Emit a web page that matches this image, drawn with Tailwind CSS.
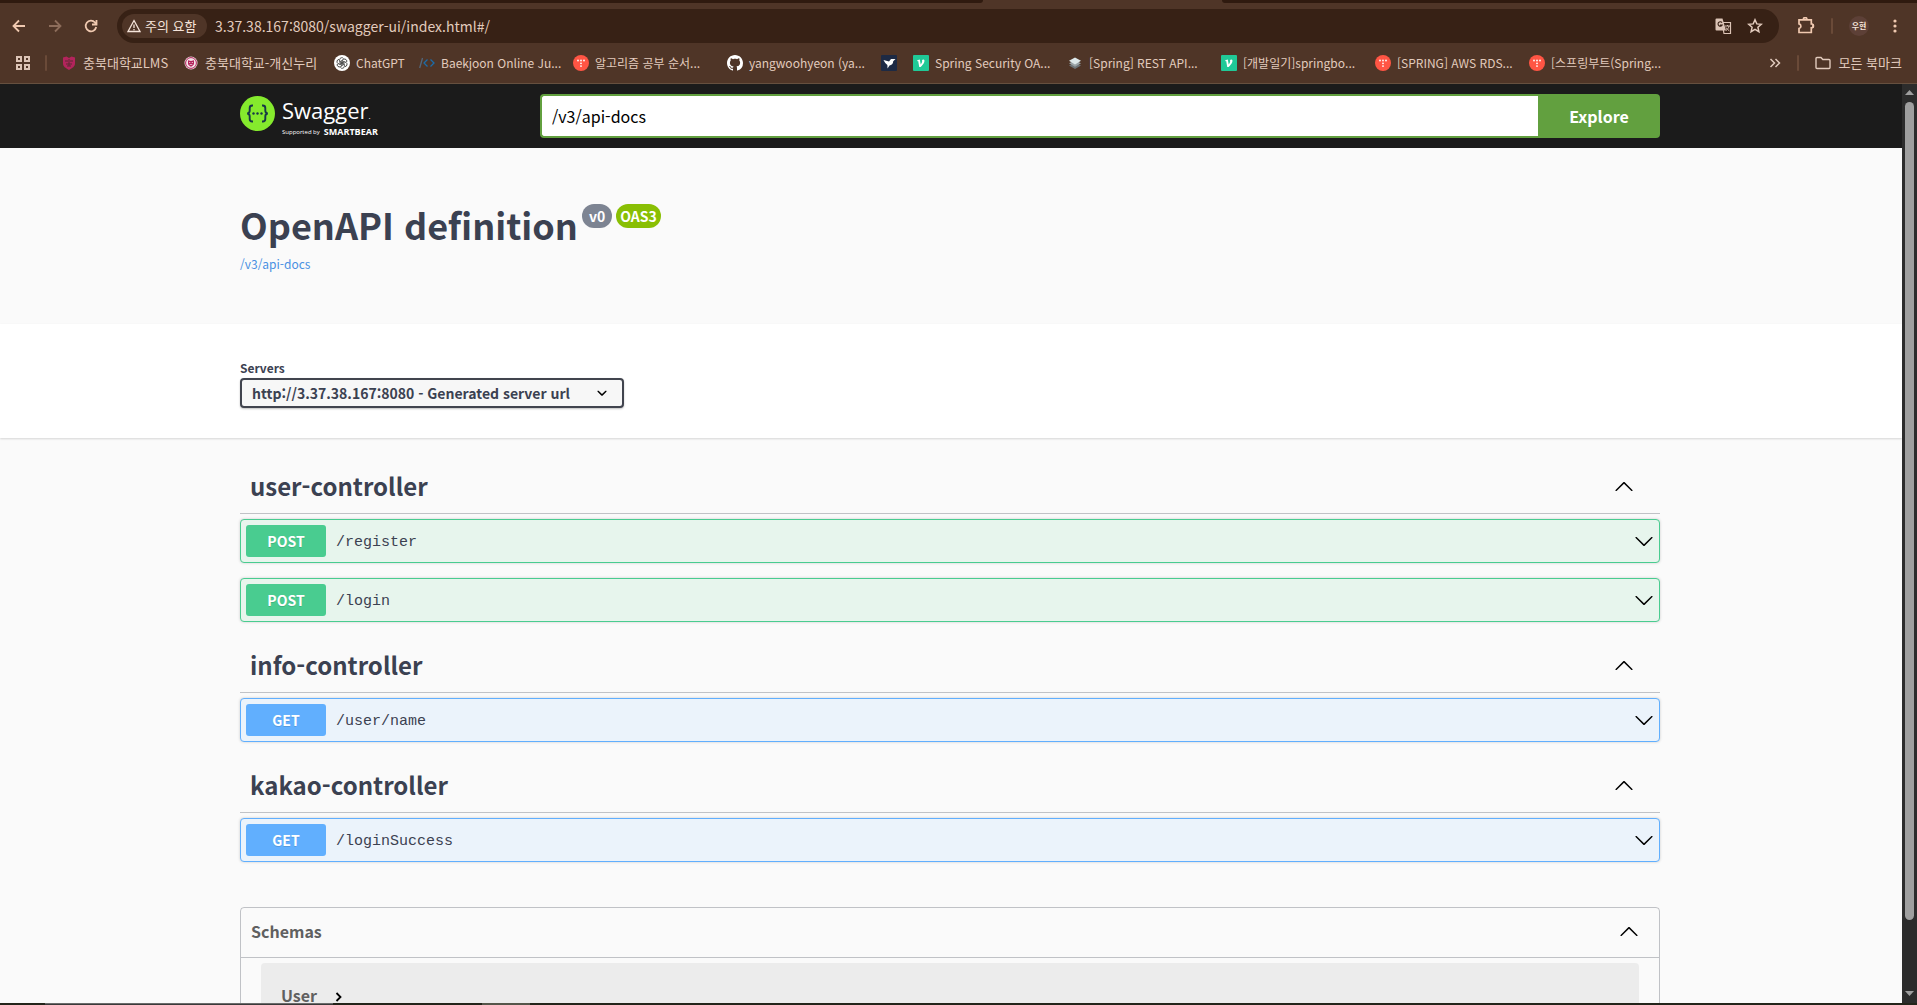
<!DOCTYPE html>
<html lang="ko">
<head>
    <meta charset="UTF-8">
    <meta name="viewport" content="width=device-width, initial-scale=1.0">
    <title>Swagger UI</title>
    <script src="https://cdn.jsdelivr.net/npm/@tailwindcss/browser@4"></script>
</head>
<body class="h-screen flex flex-col overflow-hidden bg-[#23241a] font-['Noto_Sans_CJK_KR',sans-serif] text-[#3b4151]">
    <!-- Shared icons -->
    <svg class="hidden">
        <symbol id="arrow-up" viewBox="0 0 20 20"><path d="M17.418 14.908c.272.268.709.268.979 0s.271-.701 0-.969l-7.908-7.83c-.27-.268-.707-.268-.979 0l-7.908 7.83c-.27.268-.27.701 0 .969.271.268.709.268.979 0L10 7.767l7.418 7.141z"/></symbol>
        <symbol id="arrow-down" viewBox="0 0 20 20"><path d="M17.418 6.109c.272-.268.709-.268.979 0s.271.701 0 .969l-7.908 7.83c-.27.268-.707.268-.979 0l-7.908-7.83c-.27-.268-.27-.701 0-.969.271-.268.709-.268.979 0L10 13.25l7.418-7.141z"/></symbol>
        <symbol id="tistory" viewBox="0 0 16 16"><circle cx="8" cy="8" r="8" fill="#ff5544"/><g fill="#fff"><circle cx="5" cy="5.5" r="0.9"/><circle cx="8" cy="5.5" r="0.9"/><circle cx="11" cy="5.5" r="0.9"/><circle cx="8" cy="8.3" r="0.9"/><circle cx="8" cy="11.1" r="0.9"/></g></symbol>
        <symbol id="velog" viewBox="0 0 16 16"><rect width="16" height="16" rx="1" fill="#20c997"/><path d="M4.3 5.2 6.8 4.6l.9 4.8c1-1.3 1.7-2.6 1.4-3.6-.2-.5 0-1.3 1.1-1.3 1.5 0 1.6 1.4.9 2.9-.7 1.5-2 3.2-3.5 4.7H6.2L5.2 6.1l-1 .1z" fill="#fff"/></symbol>
    </svg>

    <!-- Browser toolbar -->
    <header class="shrink-0 bg-[#4f3527] border-b border-[#66503f] text-[#e2cbbd]">
        <div class="flex h-[3px] justify-between">
            <div class="w-[983px] bg-[#2f1a0f] rounded-br-lg"></div>
            <div class="w-[695px] bg-[#2f1a0f] rounded-bl-lg"></div>
        </div>
        <div class="flex items-center pl-2 pr-[14px] pt-[6px]">
            <button class="w-[22px] flex justify-center text-[#f0c9b0]" aria-label="Back">
                <svg class="size-4" viewBox="0 0 16 16" fill="none" stroke="currentColor" stroke-width="1.8"><path d="M14 8H3M8 2.5 2.5 8 8 13.5"/></svg>
            </button>
            <button class="w-[22px] ml-[14px] flex justify-center text-[#8d6d5b]" aria-label="Forward">
                <svg class="size-4" viewBox="0 0 16 16" fill="none" stroke="currentColor" stroke-width="1.8"><path d="M2 8h11M8 2.5 13.5 8 8 13.5"/></svg>
            </button>
            <button class="w-[22px] ml-[14px] flex justify-center text-[#f0c9b0]" aria-label="Reload">
                <svg class="size-4" viewBox="0 0 16 16" fill="none" stroke="currentColor" stroke-width="1.8"><path d="M13.2 9A5.3 5.3 0 1 1 12 4.5L13.5 6M13.5 2v4.5H9"/></svg>
            </button>
            <div class="flex-1 flex items-center h-[34px] ml-[15px] pl-[5px] pr-4 rounded-full bg-[#372115]">
                <button class="flex items-center gap-1 h-6 w-[85px] px-[5px] rounded-full bg-[#4f3527] text-[13px] leading-4 text-[#f5e4da] whitespace-nowrap">
                    <svg class="size-[14px] shrink-0" viewBox="0 0 14 14" fill="none" stroke="currentColor" stroke-width="1.3"><path d="M7 1.5 13 12.5H1zM7 5.5v3.5M7 10v1.3"/></svg>
                    주의 요함
                </button>
                <input type="text" aria-label="Address" value="3.37.38.167:8080/swagger-ui/index.html#/" class="flex-1 ml-2 text-sm leading-5 text-[#e2cbbd] bg-transparent outline-none">
                <button aria-label="Translate">
                    <svg class="size-[17px]" viewBox="0 0 17 17"><path d="M7 4.5h8.5v11H9z" fill="none" stroke="#dcc4b6" stroke-width="1.2"/><path d="M1.5 0.5h6l3.5 12H1.5a1 1 0 0 1-1-1v-10a1 1 0 0 1 1-1z" fill="#dcc4b6"/><path d="M7 4.6A2.2 2.2 0 1 0 7.2 7H5" fill="none" stroke="#372115" stroke-width="1.1"/><path d="M10 8h5M12.5 7v1M14 8c-.5 2-1.5 3.5-3 4.5M11 9.5c1 1.5 2 2.5 3.2 3.2" fill="none" stroke="#dcc4b6"/></svg>
                </button>
                <button aria-label="Bookmark" class="ml-[15px]">
                    <svg class="size-4" viewBox="0 0 16 16" fill="none" stroke="#e2cbbd" stroke-width="1.5"><path d="m8 1.8 1.8 4.1 4.5.4-3.4 3 1 4.4L8 11.4l-3.9 2.3 1-4.4-3.4-3 4.5-.4z"/></svg>
                </button>
            </div>
            <button class="ml-[18px]" aria-label="Extensions">
                <svg class="size-[18px]" viewBox="0 0 18 18" fill="none" stroke="#f0c9b0" stroke-width="1.7"><path d="M2 2.8h12.3v4.2a1.9 1.9 0 0 1 0 3.8V15.5H2v-4a2.4 2.4 0 0 0 0-4.7z"/><path d="M6.3 2a1.9 1.9 0 0 1 3.7 0M15 7.4a1.5 1.5 0 0 1 0 3"/></svg>
            </button>
            <div class="w-0.5 h-4 ml-4 rounded bg-[#6a4a38]"></div>
            <button class="size-5 ml-4 rounded-full bg-[#5d4037] text-[8px] leading-5 font-bold text-[#f5e4da]">우현</button>
            <button class="ml-[18px]" aria-label="Menu">
                <svg class="size-4" viewBox="0 0 16 16" fill="#f0c9b0"><circle cx="8" cy="3" r="1.6"/><circle cx="8" cy="8" r="1.6"/><circle cx="8" cy="13" r="1.6"/></svg>
            </button>
        </div>

        <!-- Bookmarks -->
        <nav class="flex items-center h-10 pl-4 pr-[15px] text-xs whitespace-nowrap">
            <button aria-label="Apps">
                <svg class="size-[14px]" viewBox="0 0 14 14" fill="none" stroke="#dcc4b6" stroke-width="2"><path d="M1 1h4v4H1zM9 1h4v4H9zM1 9h4v4H1zM9 9h4v4H9z"/></svg>
            </button>
            <div class="w-0.5 h-4 ml-[15px] mr-[14px] rounded bg-[#6a4a38]"></div>
            <a href="#" class="flex items-center gap-[6px] w-[122px] text-[13px]">
                <svg class="size-4 shrink-0" viewBox="0 0 16 16"><path d="M2 2.5 5.5 1.5 8 3l2.5-1.5L14 2.5v6c0 3-2.5 4.5-6 6.5-3.5-2-6-3.5-6-6.5z" fill="#b3245c"/><path d="M4 6h3M9 6h3M5 9h6M8 4v7M6 11h4" stroke="#5d2a33" fill="none"/></svg>
                충북대학교LMS
            </a>
            <a href="#" class="flex items-center gap-[6px] w-[151px] text-[13px]">
                <svg class="size-4 shrink-0" viewBox="0 0 16 16"><circle cx="8" cy="8" r="6.5" fill="#f4e3e8"/><circle cx="8" cy="8" r="5.4" fill="none" stroke="#b3245c"/><path d="M5 5.3 8 6l3-.7v3.2c0 1.5-1.3 2.2-3 3.2-1.7-1-3-1.7-3-3.2z" fill="#b3245c"/><path d="M6 7.5h1.3M8.7 7.5H10M6.7 9.5h2.6" stroke="#f4e3e8" stroke-width="0.7"/></svg>
                충북대학교-개신누리
            </a>
            <a href="#" class="flex items-center gap-[6px] w-[85px]">
                <svg class="size-4 shrink-0" viewBox="0 0 16 16" fill="none" stroke="#333" stroke-width="0.8"><circle cx="8" cy="8" r="8" fill="#fff" stroke="none"/><g id="petal"><path d="M8 8 5.6 6.6V4.8a2.2 2.2 0 0 1 4-1.2"/></g><use href="#petal" transform="rotate(60 8 8)"/><use href="#petal" transform="rotate(120 8 8)"/><use href="#petal" transform="rotate(180 8 8)"/><use href="#petal" transform="rotate(240 8 8)"/><use href="#petal" transform="rotate(300 8 8)"/><circle cx="8" cy="8" r="2.2"/></svg>
                ChatGPT
            </a>
            <a href="#" class="flex items-center gap-[6px] w-[154px]">
                <svg class="size-4 shrink-0" viewBox="0 0 16 16" fill="none" stroke-width="1.3"><path d="M3.5 3 .7 13" stroke="#54677a"/><path d="M8.5 4.5 5 8l3.5 3.5M11.5 4.5 15 8l-3.5 3.5" stroke="#1c6ca8"/></svg>
                Baekjoon Online Ju...
            </a>
            <a href="#" class="flex items-center gap-[6px] w-[154px]">
                <svg class="size-4 shrink-0"><use href="#tistory"/></svg>
                알고리즘 공부 순서...
            </a>
            <a href="#" class="flex items-center gap-[6px] w-[154px]">
                <svg class="size-4 shrink-0" viewBox="0 0 16 16" fill="#fff"><path d="M8 0C3.58 0 0 3.58 0 8c0 3.54 2.29 6.53 5.47 7.59.4.07.55-.17.55-.38 0-.19-.01-.82-.01-1.49-2.01.37-2.53-.49-2.69-.94-.09-.23-.48-.94-.82-1.13-.28-.15-.68-.52-.01-.53.63-.01 1.08.58 1.23.82.72 1.21 1.87.87 2.33.66.07-.52.28-.87.51-1.07-1.78-.2-3.64-.89-3.64-3.95 0-.87.31-1.59.82-2.15-.08-.2-.36-1.02.08-2.12 0 0 .67-.21 2.2.82.64-.18 1.32-.27 2-.27s1.36.09 2 .27c1.53-1.04 2.2-.82 2.2-.82.44 1.1.16 1.92.08 2.12.51.56.82 1.27.82 2.15 0 3.07-1.87 3.75-3.65 3.95.29.25.54.73.54 1.48 0 1.07-.01 1.93-.01 2.2 0 .21.15.46.55.38A8.01 8.01 0 0 0 16 8c0-4.42-3.58-8-8-8z"/></svg>
                yangwoohyeon (ya...
            </a>
            <a href="#" class="w-8" aria-label="Bird">
                <svg class="size-4" viewBox="0 0 16 16"><rect width="16" height="16" rx="1" fill="#1d2a44"/><path d="M2.5 5 8 6.5 10 4h4.5L12.2 6.2c0 2.5-1.7 4-3.7 4.3L6.5 13.5 6.4 10C5 9 3.5 7 2.5 5z" fill="#fff"/></svg>
            </a>
            <a href="#" class="flex items-center gap-[6px] w-[154px]">
                <svg class="size-4 shrink-0"><use href="#velog"/></svg>
                Spring Security OA...
            </a>
            <a href="#" class="flex items-center gap-[6px] w-[154px]">
                <svg class="size-4 shrink-0" viewBox="0 0 16 16"><path d="m2 10.5 6 3.5 6-3.5-6-3z" fill="#6d7478"/><path d="m2 8.3 6 3.5 6-3.5-6-3z" fill="#9aa3a6"/><path d="M2 5.8 8 2.5l6 3.3-6 3.7z" fill="#dde8ea"/></svg>
                [Spring] REST API...
            </a>
            <a href="#" class="flex items-center gap-[6px] w-[154px]">
                <svg class="size-4 shrink-0"><use href="#velog"/></svg>
                [개발일기]springbo...
            </a>
            <a href="#" class="flex items-center gap-[6px] w-[154px]">
                <svg class="size-4 shrink-0"><use href="#tistory"/></svg>
                [SPRING] AWS RDS...
            </a>
            <a href="#" class="flex items-center gap-[6px] w-[154px]">
                <svg class="size-4 shrink-0"><use href="#tistory"/></svg>
                [스프링부트(Spring...
            </a>
            <button class="ml-auto" aria-label="More bookmarks">
                <svg class="size-3" viewBox="0 0 12 12" fill="none" stroke="#e2cbbd" stroke-width="1.5"><path d="m1.5 2 4 4-4 4M6.5 2l4 4-4 4"/></svg>
            </button>
            <div class="w-0.5 h-4 ml-4 mr-4 rounded bg-[#6a4a38]"></div>
            <a href="#" class="flex items-center gap-2">
                <svg class="w-4 h-[14px]" viewBox="0 0 16 14" fill="none" stroke="#e2cbbd" stroke-width="1.4"><path d="M1 2.5a1 1 0 0 1 1-1h4L7.8 3.5H14a1 1 0 0 1 1 1v7a1 1 0 0 1-1 1H2a1 1 0 0 1-1-1z"/></svg>
                <span class="text-[13px]">모든 북마크</span>
            </a>
        </nav>
    </header>

    <div class="flex-1 min-h-0 flex">
        <main class="flex-1 min-w-0 overflow-hidden bg-[#fafafa]">
            <!-- Topbar -->
            <div class="bg-[#1b1b1b]">
                <div class="max-w-[1462px] mx-auto pl-5 pr-[22px] py-[10px] flex items-center">
                    <a href="#" class="flex items-start w-[300px] h-11 pt-0.5 gap-[7px] text-white">
                        <svg class="size-[35px]" viewBox="0 0 35 35"><circle cx="17.5" cy="17.5" r="17.5" fill="#85ea2d"/><g fill="none" stroke="#173647" stroke-width="1.9"><path d="M13 9.5h-.8c-1.6 0-2.5.8-2.5 2.5v2.5c0 1.8-.7 2.8-2.5 3 1.8.2 2.5 1.2 2.5 3V23c0 1.7.9 2.5 2.5 2.5h.8M22 9.5h.8c1.6 0 2.5.8 2.5 2.5v2.5c0 1.8.7 2.8 2.5 3-1.8.2-2.5 1.2-2.5 3V23c0 1.7-.9 2.5-2.5 2.5H22"/></g><g fill="#173647"><circle cx="13.5" cy="17.5" r="1.2"/><circle cx="17.5" cy="17.5" r="1.2"/><circle cx="21.5" cy="17.5" r="1.2"/></g></svg>
                        <span class="flex flex-col gap-1 font-['Open_Sans',sans-serif]">
                            <span class="text-[22px] leading-7">Swagger<span class="text-[8px] leading-2">.</span></span>
                            <span class="flex items-center gap-1 text-[6px] leading-2 whitespace-nowrap">Supported by <b class="text-[9px]">SMARTBEAR</b></span>
                        </span>
                    </a>
                    <form class="flex flex-1">
                        <input type="text" aria-label="Definition URL" value="/v3/api-docs" class="flex-1 h-11 px-[10px] border-2 border-r-0 border-[#62a03f] rounded-l bg-white text-base text-black outline-none">
                        <button type="button" class="w-[122px] rounded-r bg-[#62a03f] text-base font-bold text-white">Explore</button>
                    </form>
                </div>
            </div>

            <!-- Info -->
            <div class="max-w-[1462px] mx-auto pl-5 pr-[22px] py-[50px] h-44">
                <div class="flex items-start h-14">
                    <h2 class="text-4xl leading-[52px] font-bold">OpenAPI definition</h2>
                    <span class="ml-1 mt-[6px] px-[7px] rounded-full bg-[#7d8492] text-sm leading-6 font-bold text-white">v0</span>
                    <span class="ml-1 mt-[6px] px-1 rounded-full bg-[#89bf04] text-sm leading-6 font-bold text-white">OAS3</span>
                </div>
                <a href="#" class="block text-xs leading-5 text-[#4990e2]">/v3/api-docs</a>
            </div>

            <!-- Servers -->
            <div class="bg-white shadow-[0_1px_2px_rgba(0,0,0,0.15)]">
                <div class="max-w-[1462px] mx-auto pl-5 pr-[22px] pt-9 pb-[30px]">
                    <label for="servers" class="block h-[18px] text-xs leading-4 font-bold">Servers</label>
                    <div class="relative w-96">
                        <select id="servers" class="appearance-none w-full h-[30px] pl-[10px] pr-10 border-2 border-[#41444e] rounded bg-[#f7f7f7] text-sm leading-5 font-bold shadow-[0_1px_2px_rgba(0,0,0,0.25)]">
                            <option>http://3.37.38.167:8080 - Generated server url</option>
                        </select>
                        <svg class="absolute right-3 top-[5px] size-5 pointer-events-none" viewBox="0 0 20 20"><path d="M13.418 7.859c.271-.268.709-.268.978 0 .27.268.272.701 0 .969l-3.908 3.83c-.27.268-.707.268-.979 0l-3.908-3.83c-.27-.267-.27-.701 0-.969.271-.268.709-.268.978 0L10 11l3.418-3.141z"/></svg>
                    </div>
                </div>
            </div>

            <!-- Operations -->
            <div class="max-w-[1462px] mx-auto pl-5 pr-[22px] pt-5">
                <section>
                    <h3 class="flex items-center justify-between h-14 pl-[10px] pr-[26px] mb-[5px] border-b border-[#3b4151]/30 text-2xl font-bold">
                        user-controller
                        <button aria-label="Collapse user-controller"><svg class="size-5"><use href="#arrow-up"/></svg></button>
                    </h3>
                    <div class="flex items-center h-11 mb-[15px] px-[5px] border border-[#49cc90] rounded bg-[#e7f5ed] shadow-[0_0_3px_rgba(0,0,0,0.19)]">
                        <span class="w-20 rounded-[3px] bg-[#49cc90] text-center text-sm leading-8 font-bold text-white text-shadow-2xs">POST</span>
                        <a href="#" class="flex-1 px-[10px] pt-1 font-['Liberation_Mono',monospace] text-[15px]">/register</a>
                        <button aria-label="Expand"><svg class="size-5"><use href="#arrow-down"/></svg></button>
                    </div>
                    <div class="flex items-center h-11 mb-[15px] px-[5px] border border-[#49cc90] rounded bg-[#e7f5ed] shadow-[0_0_3px_rgba(0,0,0,0.19)]">
                        <span class="w-20 rounded-[3px] bg-[#49cc90] text-center text-sm leading-8 font-bold text-white text-shadow-2xs">POST</span>
                        <a href="#" class="flex-1 px-[10px] pt-1 font-['Liberation_Mono',monospace] text-[15px]">/login</a>
                        <button aria-label="Expand"><svg class="size-5"><use href="#arrow-down"/></svg></button>
                    </div>
                </section>
                <section>
                    <h3 class="flex items-center justify-between h-14 pl-[10px] pr-[26px] mb-[5px] border-b border-[#3b4151]/30 text-2xl font-bold">
                        info-controller
                        <button aria-label="Collapse info-controller"><svg class="size-5"><use href="#arrow-up"/></svg></button>
                    </h3>
                    <div class="flex items-center h-11 mb-[15px] px-[5px] border border-[#61affe] rounded bg-[#ebf3fb] shadow-[0_0_3px_rgba(0,0,0,0.19)]">
                        <span class="w-20 rounded-[3px] bg-[#61affe] text-center text-sm leading-8 font-bold text-white text-shadow-2xs">GET</span>
                        <a href="#" class="flex-1 px-[10px] pt-1 font-['Liberation_Mono',monospace] text-[15px]">/user/name</a>
                        <button aria-label="Expand"><svg class="size-5"><use href="#arrow-down"/></svg></button>
                    </div>
                </section>
                <section>
                    <h3 class="flex items-center justify-between h-14 pl-[10px] pr-[26px] mb-[5px] border-b border-[#3b4151]/30 text-2xl font-bold">
                        kakao-controller
                        <button aria-label="Collapse kakao-controller"><svg class="size-5"><use href="#arrow-up"/></svg></button>
                    </h3>
                    <div class="flex items-center h-11 mb-[15px] px-[5px] border border-[#61affe] rounded bg-[#ebf3fb] shadow-[0_0_3px_rgba(0,0,0,0.19)]">
                        <span class="w-20 rounded-[3px] bg-[#61affe] text-center text-sm leading-8 font-bold text-white text-shadow-2xs">GET</span>
                        <a href="#" class="flex-1 px-[10px] pt-1 font-['Liberation_Mono',monospace] text-[15px]">/loginSuccess</a>
                        <button aria-label="Expand"><svg class="size-5"><use href="#arrow-down"/></svg></button>
                    </div>
                </section>

                <!-- Schemas -->
                <section class="mt-[45px] border border-[#3b4151]/30 rounded text-[#606060]">
                    <h4 class="flex items-center justify-between h-[50px] pl-[10px] pr-5 pb-1 border-b border-[#3b4151]/30 text-base font-bold">
                        Schemas
                        <button aria-label="Collapse schemas" class="text-black"><svg class="size-5" fill="currentColor"><use href="#arrow-up"/></svg></button>
                    </h4>
                    <div class="mx-5 mt-[5px] mb-4 h-16 px-5 flex items-center gap-[18px] rounded bg-[#ececec] text-base font-bold">
                        User
                        <button aria-label="Expand User" class="pt-1"><svg class="w-2 h-3" viewBox="0 0 8 12" fill="none" stroke="#000" stroke-width="1.8"><path d="m1.5 2 4 4-4 4"/></svg></button>
                    </div>
                </section>
            </div>
        </main>

        <!-- Scrollbar -->
        <div class="w-[15px] flex flex-col items-center pt-[6px] pb-[7px] bg-[#2c2c2c]">
            <svg class="w-[9px] h-[5px]" viewBox="0 0 9 5" fill="#9f9f9f"><path d="M4.5 0 9 5H0z"/></svg>
            <div class="flex-1 w-full pt-[7px] flex justify-center"><div class="w-[9px] h-[92%] rounded-full bg-[#9f9f9f]"></div></div>
            <svg class="w-[9px] h-[5px]" viewBox="0 0 9 5" fill="#9f9f9f"><path d="M0 0h9L4.5 5z"/></svg>
        </div>
    </div>

    <!-- Edge of the taskbar -->
    <div class="flex h-0.5 shrink-0">
        <div class="w-[288px] ml-[45px] bg-[#3a3a3a] border-t border-[#6b6b6b]"></div>
        <div class="w-12 ml-[149px] bg-[#55564a]"></div>
    </div>
</body>
</html>
